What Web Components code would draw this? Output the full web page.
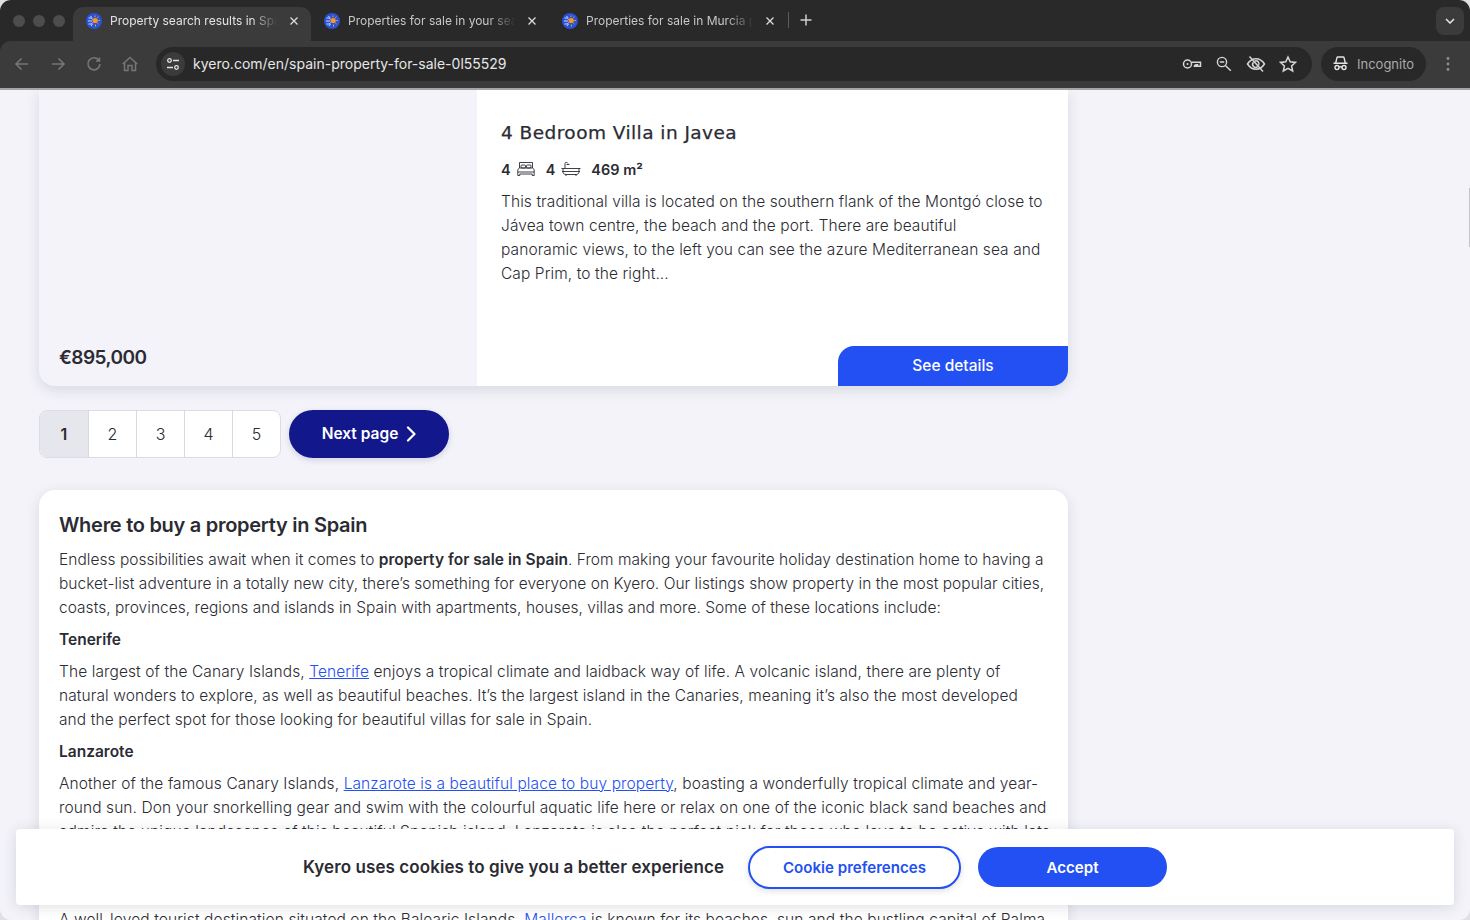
<!DOCTYPE html>
<html lang="en">
<head>
<meta charset="utf-8">
<title>Property search results in Spain</title>
<style>
  html, body { margin: 0; height: 100%; background: #dfdfe4; overflow: hidden; }
  body { font-family: "Inter", "Liberation Sans", sans-serif; color: #2b2b33; }
  browser-window { height: 920px; }
  a { color: #2350f2; }
  b { font-weight: 600; }
  .snug { letter-spacing: .03px; }
  .wide { letter-spacing: .1px; }
</style>
</head>
<body>
<browser-window>
  <browser-bar slot="bar" url="kyero.com/en/spain-property-for-sale-0l55529">
    <browser-tab active>Property search results in Spain</browser-tab>
    <browser-tab>Properties for sale in your search</browser-tab>
    <browser-tab>Properties for sale in Murcia province</browser-tab>
  </browser-bar>

  <listing-card title="4 Bedroom Villa in Javea" price="€895,000" beds="4" baths="4" area="469 m²">
    This traditional villa is located on the southern flank of the Montgó close to<br>
    Jávea town centre, the beach and the port. There are beautiful<br>
    panoramic views, to the left you can see the azure Mediterranean sea and<br>
    Cap Prim, to the right...
  </listing-card>

  <page-nav pages="5" current="1"></page-nav>

  <seo-section heading="Where to buy a property in Spain">
    <p class="snug">Endless possibilities await when it comes to <b>property for sale in Spain</b>. From making your favourite holiday destination home to having a<br>
    bucket-list adventure in a totally new city, there’s something for everyone on Kyero. Our listings show property in the most popular cities,<br>
    coasts, provinces, regions and islands in Spain with apartments, houses, villas and more. Some of these locations include:</p>
    <p><b>Tenerife</b></p>
    <p class="wide">The largest of the Canary Islands, <a href="#">Tenerife</a> enjoys a tropical climate and laidback way of life. A volcanic island, there are plenty of<br>
    natural wonders to explore, as well as beautiful beaches. It’s the largest island in the Canaries, meaning it’s also the most developed<br>
    and the perfect spot for those looking for beautiful villas for sale in Spain.</p>
    <p><b>Lanzarote</b></p>
    <p class="wide">Another of the famous Canary Islands, <a href="#">Lanzarote is a beautiful place to buy property</a>, boasting a wonderfully tropical climate and year-<br>
    round sun. Don your snorkelling gear and swim with the colourful aquatic life here or relax on one of the iconic black sand beaches and<br>
    admire the unique landscapes of this beautiful Spanish island. Lanzarote is also the perfect pick for those who love to be active with lots<br>
    of watersports and hiking trails to enjoy all year round.</p>
    <p><b>Mallorca</b></p>
    <p class="wide">A well-loved tourist destination situated on the Balearic Islands, <a href="#">Mallorca</a> is known for its beaches, sun and the bustling capital of Palma.</p>
  </seo-section>

  <side-tab slot="over"></side-tab>
  <cookie-bar slot="over">Kyero uses cookies to give you a better experience</cookie-bar>
</browser-window>

<script>
const FAVICON = `
  <svg width="16" height="16" viewBox="0 0 16 16" aria-hidden="true">
    <circle cx="8" cy="8" r="8" fill="#2a52d8"/>
    <g fill="none" stroke="#dfe6ff" stroke-width=".9">
      <path d="M2.5 5h3l1 1.5M2 8h4M2.5 11h3l1-1.5M5 13l1.500-2M4.500 3l1.500 1.800"/>
    </g>
    <circle cx="9.200" cy="7.500" r="2.600" fill="#f59a1c"/>
    <g fill="none" stroke="#f59a1c" stroke-width="1">
      <path d="M9 2.500v1.700M12.300 3.600l-1 1.300M14 7.500h-1.700M12.500 11l-1.200-1.100M9.500 13.500v-2"/>
    </g>
  </svg>`;

class BrowserWindow extends HTMLElement {
  connectedCallback() {
    const shadow = this.attachShadow({ mode: "open" });
    shadow.innerHTML = `
    <style>
      :host {
        display: flex;
        flex-direction: column;
        position: relative;
        border-radius: 11px;
        overflow: hidden;
        background: #f3f3f9;
      }
      .page {
        flex: 1;
        min-height: 0;
        overflow: hidden;
        padding: 0 402px 0 39px;
        display: flex;
        flex-direction: column;
        align-items: stretch;
        gap: 24px;
      }
    </style>
    <slot name="bar"></slot>
    <div class="page"><slot></slot></div>
    <slot name="over"></slot>
    `;
  }
}

class BrowserTab extends HTMLElement {
  connectedCallback() {
    const shadow = this.attachShadow({ mode: "open" });
    shadow.innerHTML = `
    <style>
      :host {
        display: flex;
        align-items: center;
        box-sizing: border-box;
        width: 238px;
        height: 34px;
        padding: 0 11px 7px 13px;
        gap: 8px;
        font: 12px "Inter", "Liberation Sans", sans-serif;
        color: #c7c7c7;
        border-radius: 10px 10px 0 0;
      }
      :host([active]) { background: #3b3b3b; color: #e3e3e3; }
      .icon { flex: none; width: 16px; height: 16px; }
      .label {
        flex: 1;
        min-width: 0;
        overflow: hidden;
        white-space: nowrap;
        -webkit-mask-image: linear-gradient(90deg, #000 82%, transparent 98%);
        mask-image: linear-gradient(90deg, #000 82%, transparent 98%);
      }
      .close { flex: none; width: 10px; height: 10px; margin-right: 1px; }
    </style>
    <span class="icon">${FAVICON}</span>
    <span class="label"><slot></slot></span>
    <svg class="close" viewBox="0 0 10 10"><path d="M1.500 1.500l7 7M8.500 1.500l-7 7" stroke="#dcdcdc" stroke-width="1.300" fill="none"/></svg>
    `;
  }
}

class BrowserBar extends HTMLElement {
  connectedCallback() {
    const shadow = this.attachShadow({ mode: "open" });
    const url = this.getAttribute("url");
    shadow.innerHTML = `
    <style>
      :host {
        display: block;
        flex: none;
        background: #292929;
        font-family: "Inter", "Liberation Sans", sans-serif;
      }
      .strip {
        display: flex;
        align-items: flex-end;
        height: 41px;
        padding-right: 6px;
      }
      .lights {
        display: flex;
        align-items: center;
        gap: 8px;
        height: 41px;
        width: 73px;
        box-sizing: border-box;
        padding: 0 0 0 13px;
      }
      .lights i { width: 12px; height: 12px; border-radius: 50%; background: #4d4d4d; }
      .tabs { display: flex; align-items: flex-end; }
      .sep { width: 1px; height: 16px; background: #5c5c5c; margin: 0 0 13px 1px; }
      .plus { width: 14px; height: 14px; margin: 0 0 14px 10px; }
      .more {
        margin: 0 0 6px auto;
        width: 28px;
        height: 28px;
        border-radius: 8px;
        background: #3b3b3b;
        display: flex;
        align-items: center;
        justify-content: center;
      }
      .tools {
        display: flex;
        align-items: center;
        background: #3b3b3b;
        border-top-left-radius: 11px;
        border-bottom: 2px solid #a5a5a8;
        box-sizing: border-box;
        height: 49px;
        padding: 0 14px 2px 0;
      }
      .nav { display: flex; align-items: center; gap: 16px; padding-left: 12px; }
      .nav svg { width: 20px; height: 20px; display: block; }
      .omni {
        flex: 1;
        margin-left: 16px;
        height: 34px;
        border-radius: 17px;
        background: #282828;
        display: flex;
        align-items: center;
        padding: 0 14px 0 5px;
      }
      .tune {
        width: 24px;
        height: 24px;
        border-radius: 50%;
        background: #3b3b3b;
        display: flex;
        align-items: center;
        justify-content: center;
      }
      .url { margin-left: 8px; font-size: 14px; color: #e6e6e6; flex: 1; white-space: nowrap; }
      .actions { display: flex; align-items: center; gap: 12px; }
      .actions svg { width: 20px; height: 20px; display: block; }
      .incog {
        margin-left: 9px;
        width: 105px;
        box-sizing: border-box;
        height: 34px;
        border-radius: 17px;
        background: #282828;
        display: flex;
        align-items: center;
        gap: 8px;
        padding-left: 11px;
        font-size: 13px;
        color: #aaa;
      }
      .kebab { margin-left: 14px; width: 16px; height: 16px; }
    </style>
    <div class="strip">
      <div class="lights"><i></i><i></i><i></i></div>
      <div class="tabs"><slot></slot></div>
      <span class="sep"></span>
      <svg class="plus" viewBox="0 0 14 14"><path d="M7 1.500v11M1.500 7h11" stroke="#d0d0d0" stroke-width="1.500" fill="none"/></svg>
      <span class="more"><svg width="10" height="6" viewBox="0 0 10 6"><path d="M1 1l4 4 4-4" stroke="#e6e6e6" stroke-width="1.500" fill="none"/></svg></span>
    </div>
    <div class="tools">
      <div class="nav">
        <svg viewBox="0 0 20 20" fill="none" stroke="#767676" stroke-width="1.600"><path d="M16 10H4.500M9.500 4.500L4 10l5.500 5.500"/></svg>
        <svg viewBox="0 0 20 20" fill="none" stroke="#767676" stroke-width="1.600"><path d="M4 10h11.500M10.500 4.500L16 10l-5.500 5.500"/></svg>
        <svg viewBox="0 0 20 20" fill="none" stroke="#767676" stroke-width="1.600"><path d="M15 6.500A6 6 0 1 0 16 10M15.500 3.500v3.500H12"/></svg>
        <svg viewBox="0 0 20 20" fill="none" stroke="#767676" stroke-width="1.500"><path d="M4.500 9v7.500h3.500v-5h4v5h3.500V9M2.800 10L10 3.500 17.200 10"/></svg>
      </div>
      <div class="omni">
        <span class="tune"><svg width="16" height="16" viewBox="0 0 16 16" fill="none" stroke="#e3e3e3" stroke-width="1.300"><circle cx="4.500" cy="4.500" r="1.800"/><path d="M8 4.500h6M2 11.500h6"/><circle cx="11.500" cy="11.500" r="1.800"/></svg></span>
        <span class="url">${url}</span>
        <div class="actions">
          <svg viewBox="0 0 20 20" fill="none" stroke="#d6d6d6" stroke-width="1.500"><circle cx="5.500" cy="10" r="4"/><circle cx="5.500" cy="10" r="1" fill="#d6d6d6" stroke="none"/><path d="M9.500 8.200h9v4h-3v-1.500h-1.500v1.500h-1.500v-1.500"/></svg>
          <svg viewBox="0 0 20 20" fill="none" stroke="#d6d6d6" stroke-width="1.400"><circle cx="8" cy="8" r="4.600"/><path d="M5.800 8h4.400M11.400 11.400l5.400 5.400"/></svg>
          <svg viewBox="0 0 20 20" fill="none" stroke="#d6d6d6" stroke-width="1.500"><path d="M1.500 10C4 6.200 7 4.800 10 4.800s6 1.400 8.500 5.200c-2.500 3.800-5.500 5.200-8.500 5.200S4 13.800 1.500 10z"/><path d="M7.500 8.200a3 3 0 0 0 4.300 4.200M12.600 11.500a3 3 0 0 0-4-4.200"/><path d="M3.500 2.500l13.500 15"/></svg>
          <svg viewBox="0 0 20 20" fill="none" stroke="#d6d6d6" stroke-width="1.500"><path d="M10 3l2.200 4.800 5.300.6-3.900 3.500 1.100 5.100L10 14.400 5.300 17l1.100-5.100L2.500 8.400l5.300-.6z"/></svg>
        </div>
      </div>
      <div class="incog">
        <svg width="17" height="17" viewBox="0 0 17 17" fill="none" stroke="#e3e3e3" stroke-width="1.400"><path d="M1.500 8.200h14M3.700 8l1.200-5.200c.1-.5.500-.8 1-.8h5.200c.5 0 .9.300 1 .8L13.300 8"/><circle cx="5" cy="12.500" r="2"/><circle cx="12" cy="12.500" r="2"/><path d="M7 12.200c1-.5 2-.5 3 0"/></svg>
        <span>Incognito</span>
      </div>
      <svg class="kebab" viewBox="0 0 16 16" fill="#8f8f8f"><circle cx="8" cy="2.500" r="1.400"/><circle cx="8" cy="8" r="1.400"/><circle cx="8" cy="13.500" r="1.400"/></svg>
    </div>
    `;
  }
}

class ListingCard extends HTMLElement {
  connectedCallback() {
    const shadow = this.attachShadow({ mode: "open" });
    const attr = (n) => this.getAttribute(n);
    shadow.innerHTML = `
    <style>
      :host {
        display: grid;
        grid-template-columns: 438px 1fr;
        height: 296px;
        flex: none;
        background: #f3f3f9;
        border-radius: 0 0 16px 16px;
        box-shadow: 0 4px 14px rgba(40, 40, 70, .13);
        overflow: hidden;
      }
      .photo { display: flex; align-items: flex-end; padding: 0 20px 16px; }
      .price { font-size: 19px; font-weight: 600; line-height: 24px; color: #2b2b33; letter-spacing: -.55px; }
      .info { background: #fff; display: flex; flex-direction: column; padding: 31px 24px 0; position: relative; }
      h2 {
        margin: 0;
        font: 400 18.500px/24px "DejaVu Sans", sans-serif;
        letter-spacing: .45px;
        color: #2b2b33;
        -webkit-text-stroke: .25px #2b2b33;
      }
      .specs { display: flex; align-items: center; margin-top: 12px; height: 24px; font-weight: 600; font-size: 14.500px; }
      .specs svg { display: block; margin: 0 11px 0 6px; }
      .text { margin-top: 9px; font-size: 15.500px; font-weight: 300; line-height: 24px; white-space: nowrap; color: #2b2b33; letter-spacing: .09px; }
      .btn {
        margin: auto -24px 0 auto;
        width: 230px;
        height: 40px;
        box-sizing: border-box;
        padding-bottom: 2px;
        background: #2350f2;
        color: #fff;
        display: flex;
        align-items: center;
        justify-content: center;
        font-weight: 500;
        font-size: 15.500px;
        border-radius: 16px 0 0 0;
      }
    </style>
    <div class="photo"><span class="price">${attr("price")}</span></div>
    <div class="info">
      <h2>${attr("title")}</h2>
      <div class="specs">
        <span>${attr("beds")}</span>
        <svg width="18" height="16" viewBox="0 0 18 16" fill="none" stroke="#2b2b33" stroke-width=".9"><path d="M2.500 7V1.500h13V7M.8 11V8.500l1.700-1.500h13l1.700 1.500V11zM.8 11v3.500h2V13h12.400v1.500h2V11"/><rect x="4" y="4" width="4.500" height="3" rx="1"/><rect x="9.500" y="4" width="4.500" height="3" rx="1"/></svg>
        <span>${attr("baths")}</span>
        <svg width="20" height="16" viewBox="0 0 20 16" fill="none" stroke="#2b2b33" stroke-width=".9" style="margin-right:10px"><path d="M.5 7.500h19M2 7.500v3c0 2 1 3 3 3h10c2 0 3-1 3-3v-3M4 7.500V2.500c0-1.500 2.500-1.500 3 0M5.500 3.500h3M5 15v-1.500M15 15v-1.500M1 10.500h18"/></svg>
        <span>${attr("area")}</span>
      </div>
      <div class="text"><slot></slot></div>
      <div class="btn">See details</div>
    </div>
    `;
  }
}

class PageNav extends HTMLElement {
  connectedCallback() {
    const shadow = this.attachShadow({ mode: "open" });
    const total = Number(this.getAttribute("pages"));
    const current = Number(this.getAttribute("current"));
    let cells = "";
    for (let i = 1; i <= total; i++) {
      cells += `<span class="cell${i === current ? " on" : ""}">${i}</span>`;
    }
    shadow.innerHTML = `
    <style>
      :host { display: flex; flex: none; gap: 8px; height: 48px; }
      .cells {
        display: flex;
        background: #fff;
        border: 1px solid #dcdce4;
        border-radius: 8px;
        overflow: hidden;
        box-sizing: border-box;
        height: 48px;
      }
      .cell {
        box-sizing: border-box;
        width: 48px;
        display: flex;
        align-items: center;
        justify-content: center;
        font-size: 16px;
        font-weight: 300;
        color: #2b2b33;
        border-left: 1px solid #d8d8e0;
      }
      .cell:first-child { border-left: 0; }
      .on { background: #e6e7ec; font-weight: 600; }
      .next {
        width: 160px;
        height: 48px;
        box-sizing: border-box;
        padding-bottom: 1px;
        border-radius: 24px;
        background: #12178c;
        color: #fff;
        font-weight: 600;
        font-size: 15.500px;
        display: flex;
        align-items: center;
        justify-content: center;
        gap: 8px;
        box-shadow: 0 2px 6px rgba(20, 20, 90, .15);
      }
    </style>
    <div class="cells">${cells}</div>
    <div class="next">Next page
      <svg width="10" height="16" viewBox="0 0 10 16" fill="none" stroke="#fff" stroke-width="2.200" stroke-linecap="round" stroke-linejoin="round"><path d="M2 1.500L8.500 8 2 14.500"/></svg>
    </div>
    `;
  }
}

class SeoSection extends HTMLElement {
  connectedCallback() {
    const shadow = this.attachShadow({ mode: "open" });
    shadow.innerHTML = `
    <style>
      :host {
        display: block;
        flex: none;
        margin-top: 8px;
        background: #fff;
        border-radius: 16px 16px 0 0;
        padding: 21px 20px 0;
        box-shadow: 0 4px 14px rgba(40, 40, 70, .13);
        height: 500px;
      }
      h2 { margin: 0 0 9px; font-size: 20px; line-height: 28px; font-weight: 600; color: #2b2b33; letter-spacing: -.28px; }
      .body { font-size: 15.500px; font-weight: 300; line-height: 24px; white-space: nowrap; color: #2b2b33; }
      ::slotted(p) { margin: 0 0 8px; }
    </style>
    <h2>${this.getAttribute("heading")}</h2>
    <div class="body"><slot></slot></div>
    `;
  }
}

class SideTab extends HTMLElement {
  connectedCallback() {
    const shadow = this.attachShadow({ mode: "open" });
    shadow.innerHTML = `
    <style>
      :host {
        position: absolute;
        top: 188px;
        right: 0;
        width: 1px;
        height: 59px;
        background: #c4c4ca;
        box-shadow: 0 0 18px rgba(40, 40, 70, .08);
      }
    </style>
    `;
  }
}

class CookieBar extends HTMLElement {
  connectedCallback() {
    const shadow = this.attachShadow({ mode: "open" });
    shadow.innerHTML = `
    <style>
      :host {
        position: absolute;
        left: 16px;
        right: 16px;
        bottom: 15px;
        height: 76px;
        background: #fff;
        border-radius: 4px;
        box-shadow: 0 2px 14px rgba(40, 40, 70, .14);
        display: flex;
        align-items: center;
        justify-content: center;
      }
      .msg { font-size: 17px; font-weight: 600; color: #2b2b33; white-space: nowrap; margin-right: 24px; letter-spacing: .08px; }
      .btn {
        box-sizing: border-box;
        display: flex;
        align-items: center;
        justify-content: center;
        font-weight: 600;
        font-size: 15.100px;
        border-radius: 22px;
      }
      .ghost { width: 213px; height: 43px; border: 2px solid #2350f2; color: #2350f2; background: #fff; margin-right: 17px; box-shadow: 0 2px 6px rgba(40, 40, 70, .15); }
      .solid { width: 189px; height: 40px; background: #2350f2; color: #fff; }
    </style>
    <span class="msg"><slot></slot></span>
    <span class="btn ghost">Cookie preferences</span>
    <span class="btn solid">Accept</span>
    `;
  }
}

customElements.define("browser-window", BrowserWindow);
customElements.define("browser-tab", BrowserTab);
customElements.define("browser-bar", BrowserBar);
customElements.define("listing-card", ListingCard);
customElements.define("page-nav", PageNav);
customElements.define("seo-section", SeoSection);
customElements.define("side-tab", SideTab);
customElements.define("cookie-bar", CookieBar);
</script>
</body>
</html>
